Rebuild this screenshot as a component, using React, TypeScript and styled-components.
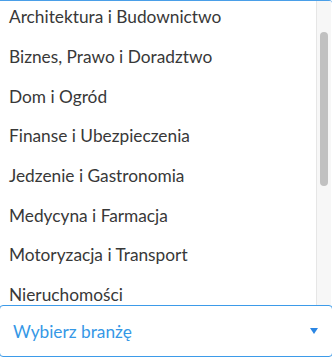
import React from "react";
import styled, { createGlobalStyle } from "styled-components";

const Global = createGlobalStyle`
  html, body { margin: 0; padding: 0; background: #fff; }
  body { font-family: "Lato", "Liberation Sans", sans-serif; }
`;

const Page = styled.div`
  width: 332px;
  height: 361px;
  display: flex;
  flex-direction: column;
  overflow: hidden;
  background: #fff;
`;

const Panel = styled.div`
  height: 304px;
  display: flex;
  border-top: 1.5px solid #4a9fe8;
  border-top-right-radius: 3px;
  overflow: hidden;
`;

const Items = styled.ul`
  flex: 1;
  list-style: none;
  margin: -4px 0 0;
  padding: 0;
`;

const Item = styled.li`
  height: 39.7px;
  display: flex;
  align-items: center;
  padding-left: 9px;
  font-size: 17.3px;
  color: #383838;
  white-space: nowrap;
`;

const Track = styled.div`
  width: 14px;
  margin-right: 1px;
  background: #f7f7f7;
  border-left: 1px solid #e6e6e6;
  display: flex;
  justify-content: center;
`;

const Thumb = styled.div`
  width: 8px;
  height: 154px;
  margin-top: 31px;
  border-radius: 4px;
  background: #c1c1c1;
`;

const Select = styled.div`
  height: 50px;
  margin: 0 -1px;
  border: 1px solid #3d9be9;
  border-radius: 4px;
  display: flex;
  align-items: center;
  justify-content: space-between;
  padding: 0 14px 0 13px;
`;

const Placeholder = styled.span`
  font-size: 17.3px;
  color: #3598e6;
`;

const Caret = styled.span`
  width: 0;
  height: 0;
  border-left: 4px solid transparent;
  border-right: 4px solid transparent;
  border-top: 6px solid #2b86e3;
`;

const options = [
  "Architektura i Budownictwo",
  "Biznes, Prawo i Doradztwo",
  "Dom i Ogród",
  "Finanse i Ubezpieczenia",
  "Jedzenie i Gastronomia",
  "Medycyna i Farmacja",
  "Motoryzacja i Transport",
  "Nieruchomości",
];

export default function App() {
  return (
    <>
      <Global />
      <Page>
        <Panel>
          <Items>
            {options.map((o) => (
              <Item key={o}>{o}</Item>
            ))}
          </Items>
          <Track>
            <Thumb />
          </Track>
        </Panel>
        <Select>
          <Placeholder>Wybierz branżę</Placeholder>
          <Caret />
        </Select>
      </Page>
    </>
  );
}
